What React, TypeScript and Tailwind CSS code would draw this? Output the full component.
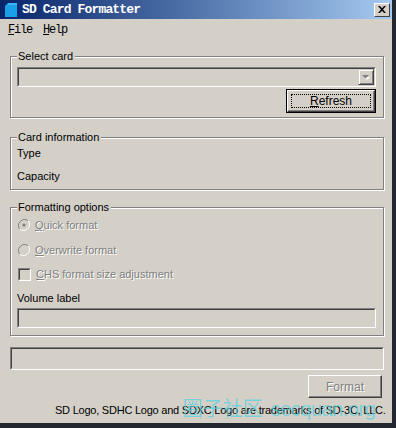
import React from "react";

const sans = { fontFamily: '"Liberation Sans", Arial, sans-serif' };

function Etched({ label, className, children }: { label: string; className: string; children?: React.ReactNode }) {
  return (
    <div className={"relative shrink-0 border border-[#808080] shadow-[inset_1px_1px_0_#fff,1px_1px_0_#fff] " + className}>
      <span className="absolute -top-[8px] left-[6px] bg-[#d4d0c8] pl-[1px] pr-[2px] text-[11px] leading-[14px] text-black">
        {label}
      </span>
      {children}
    </div>
  );
}

function Sunken({ className, children }: { className: string; children?: React.ReactNode }) {
  return (
    <div className={"shrink-0 border border-t-[#808080] border-l-[#808080] border-b-white border-r-white " + className}>
      <div className="h-full w-full border border-t-[#404040] border-l-[#404040] border-b-[#d4d0c8] border-r-[#d4d0c8]">
        {children}
      </div>
    </div>
  );
}

function Disabled({ children }: { children: React.ReactNode }) {
  return <span className="text-[#808080] [text-shadow:1px_1px_0_#fff]">{children}</span>;
}

export default function App() {
  return (
    <div className="relative h-[428px] w-[396px] overflow-hidden bg-[#23272e]" style={sans}>
      <div className="flex h-[423px] w-[392px] flex-col bg-[#d4d0c8]">
        {/* Title bar */}
        <div className="flex h-[19px] shrink-0 items-center bg-gradient-to-r from-[#0a246a] to-[#a6caf0] pl-[5px] pr-[2px]">
          <svg width="12" height="14" viewBox="0 0 12 14" className="shrink-0">
            <path d="M3 0H12V14H0V3Z" fill="#1aa0e6" />
            <path d="M3 0H12V2H3Z" fill="#3bb6f2" />
          </svg>
          <span
            className="ml-[5px] text-[13px] font-bold leading-none text-white"
            style={{ fontFamily: '"Liberation Mono", "Courier New", monospace', letterSpacing: "-0.85px" }}
          >
            SD Card Formatter
          </span>
          <div className="ml-auto flex h-[14px] w-[16px] items-center justify-center border border-t-white border-l-white border-b-[#404040] border-r-[#404040] bg-[#d4d0c8]">
            <svg width="8" height="7" viewBox="0 0 8 7">
              <path d="M0 0h2l2 2.2L6 0h2L5 3.5 8 7H6L4 4.8 2 7H0l3-3.5Z" fill="#000" />
            </svg>
          </div>
        </div>

        {/* Menu bar */}
        <div
          className="flex h-[20px] shrink-0 items-center gap-[11px] pl-[8px] pt-[1px] text-[12px] text-black"
          style={{ fontFamily: '"Liberation Mono", "Courier New", monospace', letterSpacing: "-1.2px" }}
        >
          <span>
            <span className="underline">F</span>ile
          </span>
          <span>
            <span className="underline">H</span>elp
          </span>
        </div>

        <div className="flex shrink-0 flex-col px-[10px] pt-[17px]">
          {/* Select card */}
          <Etched label="Select card" className="h-[62px] w-[374px]">
            <div className="flex flex-col items-start pl-[6px] pt-[10px]">
              <Sunken className="flex h-[20px] w-[359px]">
                <div className="flex h-full items-center justify-end">
                  <div className="ml-auto flex h-[16px] w-[16px] items-center justify-center border border-t-[#d4d0c8] border-l-[#d4d0c8] border-b-[#404040] border-r-[#404040] shadow-[inset_1px_1px_0_#fff,inset_-1px_-1px_0_#808080]">
                    <svg width="8" height="5" viewBox="0 0 8 5">
                      <path d="M1 1h6L4 4Z" fill="#fff" transform="translate(1 1)" />
                      <path d="M0 0h7L3.5 3.5Z" fill="#808080" />
                    </svg>
                  </div>
                </div>
              </Sunken>
              <div className="ml-[269px] mt-[2px] h-[24px] w-[90px] shrink-0 border border-black">
                <div className="flex h-full w-full items-center justify-center border border-t-white border-l-white border-b-[#404040] border-r-[#404040] shadow-[inset_-1px_-1px_0_#808080]">
                  <div className="flex h-[14px] w-[80px] items-center justify-center border border-dotted border-black text-[12px] leading-none text-black">
                    <span>
                      <span className="underline">R</span>efresh
                    </span>
                  </div>
                </div>
              </div>
            </div>
          </Etched>

          {/* Card information */}
          <Etched label="Card information" className="mt-[19px] h-[53px] w-[374px]">
            <div className="flex flex-col gap-[9px] pl-[6px] pt-[8px] text-[11px] leading-[14px] text-black">
              <span>Type</span>
              <span>Capacity</span>
            </div>
          </Etched>

          {/* Formatting options */}
          <Etched label="Formatting options" className="mt-[17px] h-[129px] w-[374px]">
            <div className="flex flex-col pl-[6px] pt-[10px] text-[11px] leading-[14px]">
              <div className="flex h-[14px] items-center gap-[5px] pl-[1px]">
                <svg width="12" height="12" viewBox="0 0 12 12">
                  <path d="M10.2 1.8A6 6 0 0 0 1.8 10.2" stroke="#808080" fill="none" />
                  <path d="M1.8 10.2A6 6 0 0 0 10.2 1.8" stroke="#fff" fill="none" />
                  <circle cx="6" cy="6" r="4.5" fill="#d4d0c8" />
                  <circle cx="6" cy="6" r="1.6" fill="#808080" />
                </svg>
                <Disabled>
                  <span className="underline">Q</span>uick format
                </Disabled>
              </div>
              <div className="mt-[11px] flex h-[14px] items-center gap-[5px] pl-[1px]">
                <svg width="12" height="12" viewBox="0 0 12 12">
                  <path d="M10.2 1.8A6 6 0 0 0 1.8 10.2" stroke="#808080" fill="none" />
                  <path d="M1.8 10.2A6 6 0 0 0 10.2 1.8" stroke="#fff" fill="none" />
                  <circle cx="6" cy="6" r="4.5" fill="#d4d0c8" />
                </svg>
                <Disabled>
                  <span className="underline">O</span>verwrite format
                </Disabled>
              </div>
              <div className="mt-[10px] flex h-[14px] items-center gap-[5px] pl-[1px]">
                <div className="h-[13px] w-[13px] border border-t-[#808080] border-l-[#808080] border-b-white border-r-white">
                  <div className="h-full w-full border border-t-[#404040] border-l-[#404040] border-b-[#d4d0c8] border-r-[#d4d0c8]" />
                </div>
                <Disabled>
                  <span className="underline">C</span>HS format size adjustment
                </Disabled>
              </div>
              <span className="mt-[10px] text-black">Volume label</span>
              <Sunken className="mt-[3px] h-[20px] w-[359px]" />
            </div>
          </Etched>

          {/* Progress */}
          <Sunken className="mt-[11px] h-[23px] w-[374px]" />

          {/* Format button */}
          <div className="mt-[5px] flex shrink-0 justify-end">
            <div className="flex h-[23px] w-[74px] items-center justify-center border border-t-white border-l-white border-b-[#404040] border-r-[#404040] shadow-[inset_-1px_-1px_0_#808080] text-[12px]">
              <Disabled>Format</Disabled>
            </div>
          </div>

          {/* Footer */}
          <div className="mt-[5px] shrink-0 whitespace-nowrap pl-[45px] text-[11px] leading-[14px] tracking-[-0.23px] text-black">
            SD Logo, SDHC Logo and SDXC Logo are trademarks of SD-3C, LLC.
          </div>
        </div>
      </div>

      {/* Watermark overlay */}
      <div
        className="pointer-events-none absolute left-[183px] top-[396px] flex items-baseline gap-[8px] whitespace-nowrap text-[#55d0e0] opacity-70"
        style={{ fontFamily: '"Noto Sans CJK SC", "Liberation Sans", sans-serif' }}
      >
        <span className="text-[20px] leading-[24px]">圈子社区</span>
        <span className="text-[20px] leading-[24px] tracking-[-0.5px]" style={{ fontFamily: '"Liberation Sans", sans-serif' }}>
          secquan.org
        </span>
      </div>
    </div>
  );
}
